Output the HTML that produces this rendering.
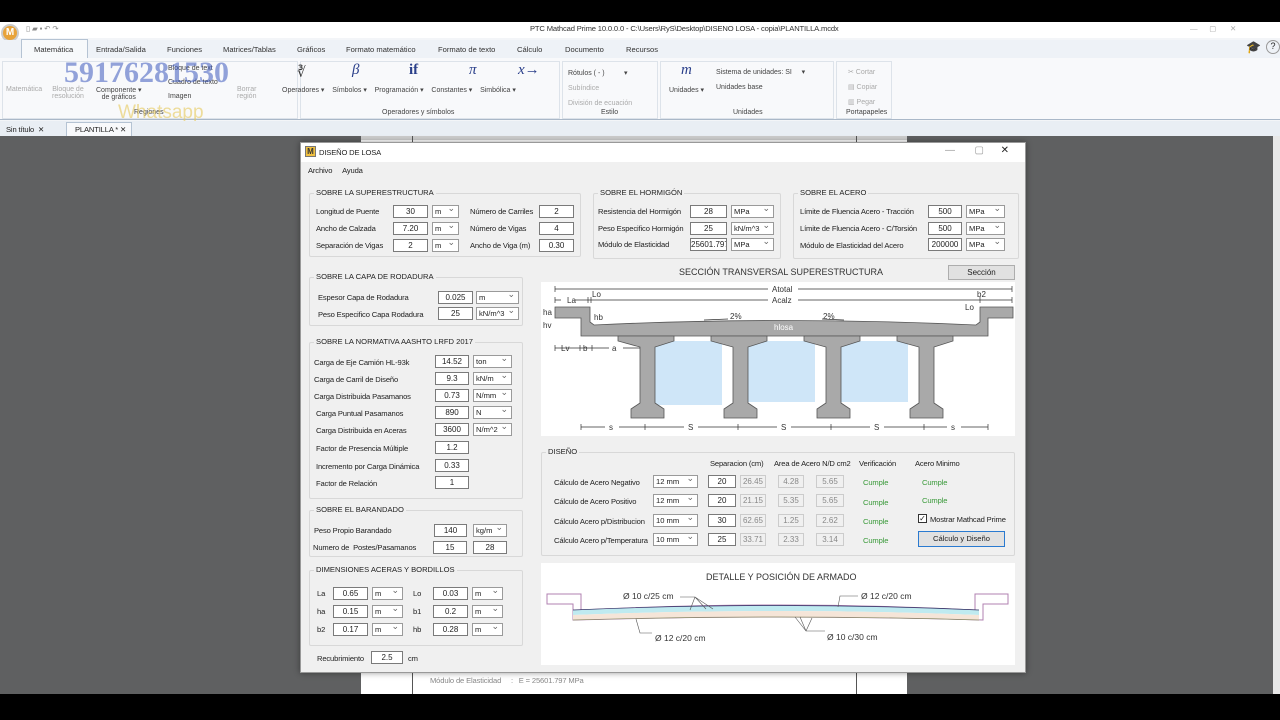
<!DOCTYPE html>
<html><head><meta charset="utf-8">
<style>
*{margin:0;padding:0;box-sizing:border-box}
body{width:1280px;height:720px;overflow:hidden;background:#000;font-family:"Liberation Sans",sans-serif;position:relative;color:#222}
.a{position:absolute;white-space:nowrap}
.t{font-size:7.6px;letter-spacing:-0.15px}
.in{position:absolute;background:#fff;border:1px solid #7a7a7a;font-size:8px;text-align:center;line-height:11px;height:13px;overflow:hidden}
.cb{position:absolute;background:#fff;border:1px solid #9a9a9a;font-size:7.6px;line-height:11px;height:13px;padding-left:2px}
.cb:after{content:"⌄";position:absolute;right:3px;top:-3px;font-size:9px;color:#666}
.gr{position:absolute;background:#f0f0f0;border:1px solid #ccc;font-size:8px;text-align:center;line-height:11px;height:13px;color:#888}
.grp{position:absolute;border:1px solid #d8d8d8;border-radius:2px}
.gl{position:absolute;background:#f0f0f0;font-size:7.6px;padding:0 2px;top:-6px;left:4px;white-space:nowrap}
.rib{font-size:7px;color:#444;text-align:center}
.dim{color:#aaa}
.tab{position:absolute;top:45px;font-size:7.6px;color:#333;white-space:nowrap}
</style></head><body>
<div class="a" style="left:0;top:22px;width:1280px;height:114px;background:#f3f5f8"></div>
<div class="a" style="left:0;top:22px;width:1280px;height:16px;background:#fff"></div>
<div class="a" style="left:1px;top:24px;width:18px;height:18px;border-radius:50%;background:#e8a33a;border:2px solid #ccc;color:#fff;font-size:10px;font-weight:bold;text-align:center;line-height:14px">M</div>
<div class="a t" style="left:26px;top:24px;color:#888">▯ ▰ ▪ ↶ ↷</div>
<div class="a t" style="left:530px;top:24px;color:#333">PTC Mathcad Prime 10.0.0.0 - C:\Users\RyS\Desktop\DISENO LOSA - copia\PLANTILLA.mcdx</div>
<div class="a t" style="left:1190px;top:24px;color:#aaa">—&nbsp;&nbsp;&nbsp;&nbsp;&nbsp;&nbsp;▢&nbsp;&nbsp;&nbsp;&nbsp;&nbsp;&nbsp;&nbsp;✕</div>
<div class="a" style="left:0;top:40px;width:1280px;height:18px;background:#eef2f7"></div>
<div class="a" style="left:21px;top:39px;width:67px;height:20px;background:#f7f9fb;border:1px solid #b5c3d3;border-bottom:none"></div>
<div class="tab" style="left:34px">Matemática</div>
<div class="tab" style="left:96px">Entrada/Salida</div>
<div class="tab" style="left:167px">Funciones</div>
<div class="tab" style="left:223px">Matrices/Tablas</div>
<div class="tab" style="left:297px">Gráficos</div>
<div class="tab" style="left:346px">Formato matemático</div>
<div class="tab" style="left:438px">Formato de texto</div>
<div class="tab" style="left:517px">Cálculo</div>
<div class="tab" style="left:565px">Documento</div>
<div class="tab" style="left:626px">Recursos</div>
<div class="a" style="left:1246px;top:40px;font-size:12px">🎓</div>
<div class="a" style="left:1266px;top:40px;width:14px;height:14px;border:1px solid #999;border-radius:50%;font-size:9px;text-align:center">?</div>
<div class="a" style="left:0;top:58px;width:1280px;height:62px;background:#f8f9fb;border-bottom:1px solid #aab8c8"></div>
<div class="a" style="left:2px;top:61px;width:296px;height:58px;border:1px solid #dde3ea"></div>
<div class="a" style="left:300px;top:61px;width:260px;height:58px;border:1px solid #dde3ea"></div>
<div class="a" style="left:562px;top:61px;width:96px;height:58px;border:1px solid #dde3ea"></div>
<div class="a" style="left:660px;top:61px;width:174px;height:58px;border:1px solid #dde3ea"></div>
<div class="a" style="left:836px;top:61px;width:56px;height:58px;border:1px solid #dde3ea"></div>
<div class="a rib dim" style="left:6px;top:86px">Matemática</div>
<div class="a rib dim" style="left:52px;top:86px">Bloque de<br>resolución</div>
<div class="a rib" style="left:96px;top:86px">Componente ▾<br>de gráficos</div>
<div class="a rib" style="left:168px;top:65px;text-align:left">Bloque de text<br><br>Cuadro de texto<br><br>Imagen</div>
<div class="a rib dim" style="left:237px;top:86px">Borrar<br>región</div>
<div class="a rib" style="left:134px;top:109px">Regiones</div>
<div class="a" style="left:297px;top:64px;font-size:14px;color:#333">∛</div>
<div class="a" style="left:352px;top:62px;font-size:15px;font-style:italic;font-family:'Liberation Serif',serif;color:#2a3f8a">β</div>
<div class="a" style="left:409px;top:62px;font-size:15px;font-weight:bold;font-family:'Liberation Serif',serif;color:#2a3f8a">if</div>
<div class="a" style="left:469px;top:62px;font-size:15px;font-style:italic;font-family:'Liberation Serif',serif;color:#2a3f8a">π</div>
<div class="a" style="left:518px;top:62px;font-size:15px;font-style:italic;font-family:'Liberation Serif',serif;color:#2a3f8a">x→</div>
<div class="a rib" style="left:282px;top:86px">Operadores ▾&nbsp;&nbsp;&nbsp;&nbsp;Símbolos ▾&nbsp;&nbsp;&nbsp;&nbsp;Programación ▾&nbsp;&nbsp;&nbsp;&nbsp;Constantes ▾&nbsp;&nbsp;&nbsp;&nbsp;Simbólica ▾</div>
<div class="a rib" style="left:382px;top:109px">Operadores y símbolos</div>
<div class="a rib" style="left:568px;top:66px;text-align:left;line-height:15px">Rótulos ( - )&nbsp;&nbsp;&nbsp;&nbsp;&nbsp;&nbsp;&nbsp;&nbsp;&nbsp;&nbsp;▾<br><span class="dim">Subíndice<br>División de ecuación</span></div>
<div class="a rib" style="left:601px;top:109px">Estilo</div>
<div class="a" style="left:681px;top:62px;font-size:15px;font-style:italic;font-family:'Liberation Serif',serif;color:#2a3f8a">m</div>
<div class="a rib" style="left:669px;top:86px">Unidades ▾</div>
<div class="a rib" style="left:716px;top:65px;text-align:left;line-height:15px">Sistema de unidades: SI&nbsp;&nbsp;&nbsp;&nbsp;&nbsp;▾<br>Unidades base</div>
<div class="a rib" style="left:733px;top:109px">Unidades</div>
<div class="a rib dim" style="left:848px;top:65px;text-align:left;line-height:15px">✂ Cortar<br>▤ Copiar<br>▥ Pegar</div>
<div class="a rib" style="left:846px;top:109px">Portapapeles</div>
<div class="a" style="left:64px;top:56px;font-size:30px;font-weight:bold;font-family:'Liberation Serif',serif;color:rgba(60,90,190,0.55)">59176281530</div>
<div class="a" style="left:118px;top:102px;font-size:19px;color:rgba(230,200,90,0.6)">Whatsapp</div>
<div class="a" style="left:0;top:121px;width:1280px;height:15px;background:#e9eef4"></div>
<div class="a t" style="left:6px;top:125px">Sin título&nbsp;&nbsp;✕</div>
<div class="a" style="left:66px;top:122px;width:66px;height:14px;background:#f8f9fb;border:1px solid #b5c3d3;border-bottom:none"></div>
<div class="a t" style="left:75px;top:125px">PLANTILLA * ✕</div>
<div class="a" style="left:0;top:136px;width:1280px;height:558px;background:#5f6061"></div>
<div class="a" style="left:1273px;top:136px;width:7px;height:558px;background:#e8e8e8"></div>
<div class="a" style="left:361px;top:136px;width:546px;height:558px;background:#fff"></div>
<div class="a" style="left:361px;top:136px;width:546px;height:4px;background:#ccc"></div>
<div class="a" style="left:412px;top:136px;width:1px;height:558px;background:#555"></div>
<div class="a" style="left:856px;top:136px;width:1px;height:558px;background:#555"></div>
<div class="a t" style="left:430px;top:676px;color:#888">Módulo de Elasticidad&nbsp;&nbsp;&nbsp;&nbsp;&nbsp;:&nbsp;&nbsp;&nbsp;E = 25601.797 MPa</div>
<!-- dialog -->
<div class="a" style="left:300px;top:142px;width:726px;height:531px;background:#f0f0f0;border:1px solid #999;box-shadow:0 0 6px rgba(0,0,0,.4)"></div>
<div class="a" style="left:301px;top:143px;width:724px;height:19px;background:#fff"></div>
<div class="a" style="left:305px;top:146px;width:11px;height:11px;background:#f0c040;border:1px solid #777;font-size:8px;font-weight:bold;text-align:center;line-height:9px;color:#333">M</div>
<div class="a t" style="left:319px;top:148px">DISEÑO DE LOSA</div>
<div class="a" style="left:945px;top:145px;font-size:10px;color:#999">—&nbsp;&nbsp;&nbsp;&nbsp;&nbsp;&nbsp;&nbsp;▢&nbsp;&nbsp;&nbsp;&nbsp;&nbsp;&nbsp;<span style="color:#222">✕</span></div>
<div class="a t" style="left:308px;top:166px">Archivo&nbsp;&nbsp;&nbsp;&nbsp;&nbsp;Ayuda</div>

<div class="grp" style="left:309px;top:193px;width:272px;height:64px"><span class="gl">SOBRE LA SUPERESTRUCTURA</span></div>
<div class="a t" style="left:316px;top:207px">Longitud de Puente</div>
<div class="a t" style="left:316px;top:224px">Ancho de Calzada</div>
<div class="a t" style="left:316px;top:241px">Separación de Vigas</div>
<div class="in" style="left:393px;top:205px;width:35px">30</div><div class="cb" style="left:432px;top:205px;width:27px">m</div>
<div class="in" style="left:393px;top:222px;width:35px">7.20</div><div class="cb" style="left:432px;top:222px;width:27px">m</div>
<div class="in" style="left:393px;top:239px;width:35px">2</div><div class="cb" style="left:432px;top:239px;width:27px">m</div>
<div class="a t" style="left:470px;top:207px">Número de Carriles</div>
<div class="a t" style="left:470px;top:224px">Número de Vigas</div>
<div class="a t" style="left:470px;top:241px">Ancho de Viga (m)</div>
<div class="in" style="left:539px;top:205px;width:35px">2</div>
<div class="in" style="left:539px;top:222px;width:35px">4</div>
<div class="in" style="left:539px;top:239px;width:35px">0.30</div>

<div class="grp" style="left:593px;top:193px;width:188px;height:66px"><span class="gl">SOBRE EL HORMIGÓN</span></div>
<div class="a t" style="left:598px;top:207px">Resistencia del Hormigón</div>
<div class="a t" style="left:598px;top:224px">Peso Especifico Hormigón</div>
<div class="a t" style="left:598px;top:240px">Módulo de Elasticidad</div>
<div class="in" style="left:690px;top:205px;width:37px">28</div><div class="cb" style="left:731px;top:205px;width:43px">MPa</div>
<div class="in" style="left:690px;top:222px;width:37px">25</div><div class="cb" style="left:731px;top:222px;width:43px">kN/m^3</div>
<div class="in" style="left:690px;top:238px;width:37px">25601.797</div><div class="cb" style="left:731px;top:238px;width:43px">MPa</div>

<div class="grp" style="left:793px;top:193px;width:226px;height:66px"><span class="gl">SOBRE EL ACERO</span></div>
<div class="a t" style="left:800px;top:207px">Límite de Fluencia Acero - Tracción</div>
<div class="a t" style="left:800px;top:224px">Límite de Fluencia Acero - C/Torsión</div>
<div class="a t" style="left:800px;top:241px">Módulo de Elasticidad del Acero</div>
<div class="in" style="left:928px;top:205px;width:34px">500</div><div class="cb" style="left:966px;top:205px;width:39px">MPa</div>
<div class="in" style="left:928px;top:222px;width:34px">500</div><div class="cb" style="left:966px;top:222px;width:39px">MPa</div>
<div class="in" style="left:928px;top:238px;width:34px">200000</div><div class="cb" style="left:966px;top:238px;width:39px">MPa</div>

<div class="grp" style="left:309px;top:277px;width:214px;height:49px"><span class="gl">SOBRE LA CAPA DE RODADURA</span></div>
<div class="a t" style="left:318px;top:293px">Espesor Capa de Rodadura</div>
<div class="a t" style="left:318px;top:310px">Peso Especifico Capa Rodadura</div>
<div class="in" style="left:438px;top:291px;width:35px">0.025</div><div class="cb" style="left:476px;top:291px;width:43px">m</div>
<div class="in" style="left:438px;top:307px;width:35px">25</div><div class="cb" style="left:476px;top:307px;width:43px">kN/m^3</div>

<div class="grp" style="left:309px;top:342px;width:214px;height:157px"><span class="gl">SOBRE LA NORMATIVA AASHTO LRFD 2017</span></div>
<div class="a t" style="left:314px;top:358px">Carga de Eje Camión HL-93k</div>
<div class="a t" style="left:314px;top:375px">Carga de Carril de Diseño</div>
<div class="a t" style="left:314px;top:392px">Carga Distribuida Pasamanos</div>
<div class="a t" style="left:316px;top:409px">Carga Puntual Pasamanos</div>
<div class="a t" style="left:316px;top:426px">Carga Distribuida en Aceras</div>
<div class="a t" style="left:316px;top:444px">Factor de Presencia Múltiple</div>
<div class="a t" style="left:316px;top:462px">Incremento por Carga Dinámica</div>
<div class="a t" style="left:316px;top:479px">Factor de Relación</div>
<div class="in" style="left:435px;top:355px;width:34px">14.52</div><div class="cb" style="left:473px;top:355px;width:39px">ton</div>
<div class="in" style="left:435px;top:372px;width:34px">9.3</div><div class="cb" style="left:473px;top:372px;width:39px">kN/m</div>
<div class="in" style="left:435px;top:389px;width:34px">0.73</div><div class="cb" style="left:473px;top:389px;width:39px">N/mm</div>
<div class="in" style="left:435px;top:406px;width:34px">890</div><div class="cb" style="left:473px;top:406px;width:39px">N</div>
<div class="in" style="left:435px;top:423px;width:34px">3600</div><div class="cb" style="left:473px;top:423px;width:39px">N/m^2</div>
<div class="in" style="left:435px;top:441px;width:34px">1.2</div>
<div class="in" style="left:435px;top:459px;width:34px">0.33</div>
<div class="in" style="left:435px;top:476px;width:34px">1</div>

<div class="grp" style="left:309px;top:510px;width:214px;height:47px"><span class="gl">SOBRE EL BARANDADO</span></div>
<div class="a t" style="left:314px;top:526px">Peso Propio Barandado</div>
<div class="a t" style="left:313px;top:543px">Numero de&nbsp; Postes/Pasamanos</div>
<div class="in" style="left:434px;top:524px;width:33px">140</div><div class="cb" style="left:473px;top:524px;width:34px">kg/m</div>
<div class="in" style="left:433px;top:541px;width:34px">15</div><div class="in" style="left:473px;top:541px;width:34px">28</div>

<div class="grp" style="left:309px;top:570px;width:214px;height:76px"><span class="gl">DIMENSIONES ACERAS Y BORDILLOS</span></div>
<div class="a t" style="left:317px;top:589px">La</div><div class="a t" style="left:317px;top:607px">ha</div><div class="a t" style="left:317px;top:625px">b2</div>
<div class="a t" style="left:413px;top:589px">Lo</div><div class="a t" style="left:413px;top:607px">b1</div><div class="a t" style="left:413px;top:625px">hb</div>
<div class="in" style="left:333px;top:587px;width:35px">0.65</div><div class="cb" style="left:372px;top:587px;width:31px">m</div>
<div class="in" style="left:333px;top:605px;width:35px">0.15</div><div class="cb" style="left:372px;top:605px;width:31px">m</div>
<div class="in" style="left:333px;top:623px;width:35px">0.17</div><div class="cb" style="left:372px;top:623px;width:31px">m</div>
<div class="in" style="left:433px;top:587px;width:35px">0.03</div><div class="cb" style="left:472px;top:587px;width:31px">m</div>
<div class="in" style="left:433px;top:605px;width:35px">0.2</div><div class="cb" style="left:472px;top:605px;width:31px">m</div>
<div class="in" style="left:433px;top:623px;width:35px">0.28</div><div class="cb" style="left:472px;top:623px;width:31px">m</div>
<div class="a t" style="left:317px;top:654px">Recubrimiento</div>
<div class="in" style="left:371px;top:651px;width:32px">2.5</div>
<div class="a t" style="left:408px;top:654px">cm</div>

<div class="a" style="left:679px;top:267px;font-size:9px;color:#333">SECCIÓN TRANSVERSAL SUPERESTRUCTURA</div>
<div class="a" style="left:948px;top:265px;width:67px;height:15px;background:#e1e1e1;border:1px solid #adadad;font-size:8px;text-align:center;line-height:13px">Sección</div>
<svg class="a" style="left:541px;top:282px" width="474" height="154" viewBox="541 282 474 154">
<rect x="541" y="282" width="474" height="154" fill="#fff"/>
<g fill="#cfe6f8"><path d="M650 341 H722 V405 L650 405Z"/><path d="M743 341 H815 V402 H743Z"/><path d="M835 341 H908 V402 H835Z"/></g>
<g fill="#a9a9a9" stroke="#555" stroke-width="0.8">
<path d="M555 307 H590 V322 L594 325 Q780 316 976 325 L980 322 V307 H1013 V318 H988 V336 H581 V318 H555Z"/>
<path id="g" d="M618 336 H674 V341 L655 347 V403 L664 409 V418 H631 V409 L640 403 V347 L618 341Z"/>
<use href="#g" x="93"/><use href="#g" x="186"/><use href="#g" x="279"/>
</g>
<g stroke="#333" stroke-width="0.7" fill="none">
<path d="M555 289 H1012 M555 286 V292 M1012 286 V292"/>
<path d="M555 300 H1012 M555 297 V303 M588 297V303 M591 297 V303 M1012 297V303 M980 297V303"/>
<path d="M555 348 H640 M555 345V351 M580 345V351 M592 345V351"/>
<path d="M581 427 H988 M581 424V430 M645 424V430 M738 424V430 M831 424V430 M924 424V430 M988 424V430"/>
<path d="M728 319 L704 320 M822 319 L844 320"/>
</g>
<g fill="#fff"><rect x="768" y="285" width="30" height="8"/><rect x="768" y="296" width="30" height="8"/><rect x="605" y="424" width="14" height="7"/><rect x="684" y="424" width="14" height="7"/><rect x="777" y="424" width="14" height="7"/><rect x="870" y="424" width="14" height="7"/><rect x="947" y="424" width="14" height="7"/><rect x="561" y="296" width="14" height="8"/><rect x="609" y="345" width="14" height="7"/></g>
<g font-family="Liberation Sans" font-size="8" fill="#333">
<text x="772" y="292">Atotal</text><text x="772" y="303">Acalz</text>
<text x="567" y="303">La</text><text x="592" y="297">Lo</text><text x="977" y="297">b2</text><text x="965" y="310">Lo</text>
<text x="543" y="315">ha</text><text x="543" y="328">hv</text><text x="594" y="320">hb</text>
<text x="730" y="319">2%</text><text x="823" y="319">2%</text><text x="774" y="330" fill="#fff">hlosa</text>
<text x="561" y="351">Lv</text><text x="583" y="351">b</text><text x="612" y="351">a</text>
<text x="609" y="430">s</text><text x="688" y="430">S</text><text x="781" y="430">S</text><text x="874" y="430">S</text><text x="951" y="430">s</text>
</g>
</svg>

<div class="grp" style="left:541px;top:452px;width:474px;height:104px"><span class="gl">DISEÑO</span></div>
<div class="a t" style="left:710px;top:459px">Separacion (cm)</div>
<div class="a t" style="left:774px;top:459px">Area de Acero N/D cm2</div>
<div class="a t" style="left:859px;top:459px">Verificación</div>
<div class="a t" style="left:915px;top:459px">Acero Minimo</div>
<div class="a t" style="left:554px;top:478px">Cálculo de Acero Negativo</div>
<div class="a t" style="left:554px;top:497px">Cálculo de Acero Positivo</div>
<div class="a t" style="left:554px;top:517px">Cálculo Acero p/Distribucion</div>
<div class="a t" style="left:554px;top:536px">Cálculo Acero p/Temperatura</div>
<div class="cb" style="left:653px;top:475px;width:45px">12 mm</div><div class="in" style="left:708px;top:475px;width:28px">20</div><div class="gr" style="left:740px;top:475px;width:26px">26.45</div><div class="gr" style="left:778px;top:475px;width:26px">4.28</div><div class="gr" style="left:816px;top:475px;width:28px">5.65</div>
<div class="cb" style="left:653px;top:494px;width:45px">12 mm</div><div class="in" style="left:708px;top:494px;width:28px">20</div><div class="gr" style="left:740px;top:494px;width:26px">21.15</div><div class="gr" style="left:778px;top:494px;width:26px">5.35</div><div class="gr" style="left:816px;top:494px;width:28px">5.65</div>
<div class="cb" style="left:653px;top:514px;width:45px">10 mm</div><div class="in" style="left:708px;top:514px;width:28px">30</div><div class="gr" style="left:740px;top:514px;width:26px">62.65</div><div class="gr" style="left:778px;top:514px;width:26px">1.25</div><div class="gr" style="left:816px;top:514px;width:28px">2.62</div>
<div class="cb" style="left:653px;top:533px;width:45px">10 mm</div><div class="in" style="left:708px;top:533px;width:28px">25</div><div class="gr" style="left:740px;top:533px;width:26px">33.71</div><div class="gr" style="left:778px;top:533px;width:26px">2.33</div><div class="gr" style="left:816px;top:533px;width:28px">3.14</div>
<div class="a t" style="left:863px;top:478px;color:#3a9a3a">Cumple</div>
<div class="a t" style="left:863px;top:498px;color:#3a9a3a">Cumple</div>
<div class="a t" style="left:863px;top:517px;color:#3a9a3a">Cumple</div>
<div class="a t" style="left:863px;top:536px;color:#3a9a3a">Cumple</div>
<div class="a t" style="left:922px;top:478px;color:#3a9a3a">Cumple</div>
<div class="a t" style="left:922px;top:496px;color:#3a9a3a">Cumple</div>
<div class="a" style="left:918px;top:514px;width:9px;height:9px;border:1px solid #333;background:#fff;font-size:8px;line-height:7px;text-align:center">✓</div>
<div class="a t" style="left:930px;top:515px">Mostrar Mathcad Prime</div>
<div class="a" style="left:918px;top:531px;width:87px;height:16px;background:#e1e1e1;border:1px solid #2a7ad0;font-size:7.6px;text-align:center;line-height:14px">Cálculo y Diseño</div>

<svg class="a" style="left:541px;top:563px" width="474" height="102" viewBox="541 563 474 102">
<rect x="541" y="563" width="474" height="102" fill="#fff"/>
<text x="706" y="580" font-family="Liberation Sans" font-size="9" fill="#333">DETALLE Y POSICIÓN DE ARMADO</text>
<path d="M547 594 H581 V610 Q780 600 975 610 V594 H1008 V604 H983 V620 Q780 614 573 620 V604 H547Z" fill="none" stroke="#b080b0" stroke-width="1"/>
<path d="M573 610 Q780 601 979 610 L979 615 Q780 607 573 615Z" fill="#bfeaf0"/>
<path d="M573 615 Q780 607 979 615 L979 620 Q780 614 573 620Z" fill="#f5e5d8"/>
<path d="M573 610 Q780 601 979 610" stroke="#336" stroke-width="0.7" fill="none"/>
<path d="M573 620 Q780 614 979 620" stroke="#886" stroke-width="0.7" fill="none"/>
<g stroke="#555" stroke-width="0.6" fill="none"><path d="M680 597 H695 L713 609 M695 597 L706 609 M695 597 L690 610"/><path d="M858 596 H840 L838 607"/><path d="M636 619 L640 633 H652"/><path d="M800 617 L806 631 H825 M806 631 L795 617 M806 631 L812 618"/></g>
<g font-family="Liberation Sans" font-size="8.5" fill="#333"><text x="623" y="599">Ø 10 c/25 cm</text><text x="861" y="599">Ø 12 c/20 cm</text><text x="655" y="641">Ø 12 c/20 cm</text><text x="827" y="640">Ø 10 c/30 cm</text></g>
</svg>
</body></html>
